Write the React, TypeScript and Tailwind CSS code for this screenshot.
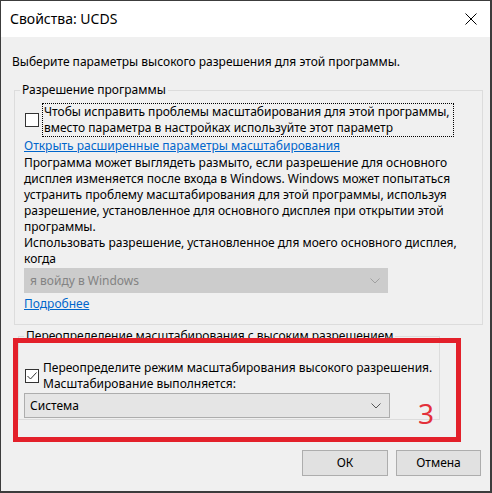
const Chevron = ({ color }: { color: string }) => (
  <svg width="10" height="6" viewBox="0 0 10 6" fill="none">
    <path d="M0.5 0.5 L5 5 L9.5 0.5" stroke={color} strokeWidth="1" />
  </svg>
);

export default function App() {
  return (
    <div className="h-[493px] w-[492px] bg-[#3c3c3c] pl-[1px] pt-[1px] font-['Noto_Sans',sans-serif] text-[12px] leading-[16px] text-black">
      <div className="relative flex h-[490px] w-[489px] flex-col bg-[#f0f0f0]">
        {/* title bar */}
        <div className="flex h-[36px] items-center justify-between bg-white pl-[9px] pr-[13px]">
          <span className="text-[14px]">Свойства: UCDS</span>
          <svg width="12" height="12" viewBox="0 0 12 12">
            <path d="M0.5 0.5 L11.5 11.5 M11.5 0.5 L0.5 11.5" stroke="#000" strokeWidth="1" />
          </svg>
        </div>

        <div className="mt-[17px] pl-[11px]">Выберите параметры высокого разрешения для этой программы.</div>

        <fieldset className="ml-[13px] mt-[12px] w-[469px] border border-[#dcdcdc] pb-[12px] pl-[9px] pr-[6px]">
          <legend className="-ml-[4px] px-[2px]">Разрешение программы</legend>
          <div className="mt-[5px] flex items-center">
            <div className="ml-[1px] mr-[3px] h-[14px] w-[14px] border border-[#333] bg-white" />
            <div className="border border-dotted border-black pl-[1px] pr-[3px]">
              Чтобы исправить проблемы масштабирования для этой программы,
              <br />
              вместо параметра в настройках используйте этот параметр
            </div>
          </div>
          <div className="mt-[1px] text-[#0066cc] underline">Открыть расширенные параметры масштабирования</div>
          <div className="mt-[1px]">
            Программа может выглядеть размыто, если разрешение для основного дисплея изменяется после входа в Windows. Windows может попытаться устранить проблему масштабирования для этой программы, используя разрешение, установленное для основного дисплея при открытии этой программы.
          </div>
          <div>Использовать разрешение, установленное для моего основного дисплея, когда</div>
          <div className="mt-[1px] flex h-[25px] w-[364px] items-center justify-between bg-[#cccccc] pl-[6px] pr-[8px] text-[#838383]">
            <span>я войду в Windows</span>
            <Chevron color="#a0a0a0" />
          </div>
          <div className="mt-[3px] text-[#0066cc] underline">Подробнее</div>
        </fieldset>

        <fieldset className="ml-[17px] mt-[3px] w-[422px] border border-[#dcdcdc] pb-[1px] pl-[5px]">
          <legend className="px-[2px]">Переопределение масштабирования с высоким разрешением</legend>
          <div className="mt-[16px] flex items-center">
            <div className="ml-[1px] mr-[4px] flex h-[14px] w-[14px] items-center justify-center border border-[#333] bg-white">
              <svg width="10" height="8" viewBox="0 0 10 8" fill="none">
                <path d="M0.5 4 L3.5 7 L9.5 0.5" stroke="#333" strokeWidth="1" />
              </svg>
            </div>
            <div>
              Переопределите режим масштабирования высокого разрешения.
              <br />
              Масштабирование выполняется:
            </div>
          </div>
          <div className="mt-[1px] flex h-[25px] w-[366px] items-center justify-between border border-[#adadad] bg-[#e5e5e5] pl-[5px] pr-[8px]">
            <span>Система</span>
            <Chevron color="#555" />
          </div>
        </fieldset>

        <div className="mr-[9px] mt-[30px] flex justify-end gap-[8px]">
          <button className="h-[26px] w-[86px] border border-[#adadad] bg-[#e1e1e1]">ОК</button>
          <button className="h-[26px] w-[85px] border border-[#adadad] bg-[#e1e1e1]">Отмена</button>
        </div>

        {/* red annotation */}
        <div className="absolute left-[12px] top-[337px] h-[104px] w-[448px] border-[5px] border-[#e3202a]" />
        <div className="absolute left-[417px] top-[396px] text-[28px] leading-[32px] text-[#e3303a]">3</div>
      </div>
    </div>
  );
}
